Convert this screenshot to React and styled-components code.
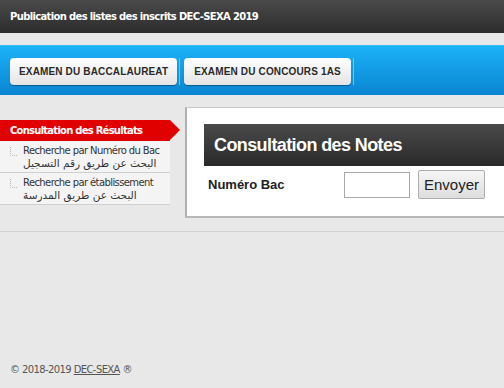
import styled, { createGlobalStyle } from "styled-components";

const GlobalStyle = createGlobalStyle`
  html, body {
    margin: 0;
    padding: 0;
    background: #e8e8e8;
    overflow: hidden;
  }
  body {
    font-family: "DejaVu Sans", Verdana, sans-serif;
  }
`

const Page = styled.div`
  width: 504px;
  height: 388px;
  overflow: hidden;
  background: #e8e8e8;
`

const TopBar = styled.div`
  height: 33px;
  display: flex;
  align-items: center;
  padding-left: 10px;
  background: linear-gradient(#4a4a4a, #2c2c2c);
  color: #fff;
  font-family: "DejaVu Sans", sans-serif;
  font-weight: bold;
  font-size: 10px;
  letter-spacing: -0.65px;
`

const NavBand = styled.div`
  margin-top: 12px;
  height: 50px;
  box-sizing: border-box;
  padding: 12px 0 0 10px;
  display: flex;
  align-items: flex-start;
  background: linear-gradient(#1cb3f8, #0a84d0);
  border-top: 1px solid #35bdf8;
`

const NavButton = styled.div`
  height: 27px;
  padding: 0 ${p => p.$pad}px;
  display: flex;
  align-items: center;
  border-radius: 4px;
  background: linear-gradient(#ffffff, #e4e4e4);
  box-shadow: 0 1px 1px rgba(0, 0, 0, 0.35);
  color: #2a2a2a;
  font-family: "Liberation Sans", Arial, sans-serif;
  font-weight: bold;
  font-size: 10px;
  letter-spacing: 0.15px;
`

const NavSep = styled.div`
  width: 1px;
  height: 27px;
  margin: 0 4px 0 2px;
  background: #5fcaf6;
`

const Content = styled.div`
  display: flex;
  padding-top: 12px;
  align-items: flex-start;
`

const Sidebar = styled.div`
  width: 185px;
  flex: none;
  padding-top: 13px;
`

const SideHead = styled.div`
  position: relative;
  width: 170px;
  height: 21px;
  box-sizing: border-box;
  padding-left: 10px;
  display: flex;
  align-items: center;
  background: #e00000;
  color: #fff;
  font-family: "DejaVu Sans", sans-serif;
  font-weight: bold;
  font-size: 10px;
  letter-spacing: -0.75px;
  &::after {
    content: "";
    position: absolute;
    right: -10px;
    top: 0;
    border-top: 10.5px solid transparent;
    border-bottom: 10.5px solid transparent;
    border-left: 10px solid #e00000;
  }
`

const SideItem = styled.div`
  width: 170px;
  box-sizing: border-box;
  padding: 3px 0 2px 10px;
  display: flex;
  gap: 5px;
  background: #f4f4f4;
  border-bottom: 1px solid #cfcfcf;
  color: #333;
  font-family: "DejaVu Sans", sans-serif;
  font-size: 10px;
  letter-spacing: -0.6px;
  line-height: 13px;
`

const Arabic = styled.div`
  direction: rtl;
  text-align: left;
  unicode-bidi: plaintext;
  letter-spacing: 0;
  font-size: 10.5px;
`

const Panel = styled.div`
  width: 340px;
  flex: none;
  box-sizing: border-box;
  padding: 16px 0 0 17px;
  height: 111px;
  background: #fff;
  border-top: 1px solid #c8c8c8;
  border-left: 2px solid #b0b0b0;
  border-bottom: 2px solid #b8b8b8;
`

const PanelHead = styled.div`
  height: 42px;
  display: flex;
  align-items: center;
  padding-left: 10px;
  background: linear-gradient(#4a4a4a, #2a2a2a);
  color: #fff;
  font-family: "Liberation Sans", Arial, sans-serif;
  font-weight: bold;
  font-size: 18px;
  letter-spacing: -0.6px;
`

const FormRow = styled.div`
  display: flex;
  align-items: center;
  height: 37px;
  padding-left: 4px;
`

const Label = styled.div`
  width: 136px;
  font-family: "Liberation Sans", Arial, sans-serif;
  font-weight: bold;
  font-size: 13px;
  color: #222;
`

const Input = styled.input`
  width: 66px;
  height: 26px;
  box-sizing: border-box;
  border: 1px solid #a9a9a9;
  margin: 0 8px 0 0;
  padding: 0;
`

const Button = styled.button`
  height: 29px;
  padding: 0 5px;
  border: 1px solid #adadad;
  border-radius: 2px;
  background: linear-gradient(#f6f6f6, #dddddd);
  color: #222;
  font-family: "Liberation Sans", Arial, sans-serif;
  font-size: 15px;
`

const Divider = styled.div`
  margin-top: 13px;
  border-top: 1px solid #d2d2d2;
`

const Footer = styled.div`
  margin-top: 132px;
  padding-left: 10px;
  color: #555;
  font-family: "DejaVu Sans", sans-serif;
  font-size: 10px;
  letter-spacing: -0.6px;
  a {
    color: #555;
    text-decoration: underline;
  }
`

const TreeMark = () => (
  <svg width="8" height="9" viewBox="0 0 8 9" style={{ flex: "none", marginTop: 3 }}>
    <path d="M0.5 0v8.5H8" stroke="#b5b5b5" strokeDasharray="1 1" fill="none" />
  </svg>
)

export default function App() {
  return (
    <Page>
      <GlobalStyle />
      <TopBar>Publication des listes des inscrits DEC-SEXA 2019</TopBar>
      <NavBand>
        <NavButton $pad={9}>EXAMEN DU BACCALAUREAT</NavButton>
        <NavSep />
        <NavButton $pad={10}>EXAMEN DU CONCOURS 1AS</NavButton>
        <NavSep />
      </NavBand>
      <Content>
        <Sidebar>
          <SideHead>Consultation des Résultats</SideHead>
          <SideItem>
            <TreeMark />
            <div>
              Recherche par Numéro du Bac
              <Arabic>البحث عن طريق رقم التسجيل</Arabic>
            </div>
          </SideItem>
          <SideItem>
            <TreeMark />
            <div>
              Recherche par établissement
              <Arabic>البحث عن طريق المدرسة</Arabic>
            </div>
          </SideItem>
        </Sidebar>
        <Panel>
          <PanelHead>Consultation des Notes</PanelHead>
          <FormRow>
            <Label>Numéro Bac</Label>
            <Input type="text" />
            <Button>Envoyer</Button>
          </FormRow>
        </Panel>
      </Content>
      <Divider />
      <Footer>
        © 2018-2019 <a href="#">DEC-SEXA</a> ®
      </Footer>
    </Page>
  )
}
